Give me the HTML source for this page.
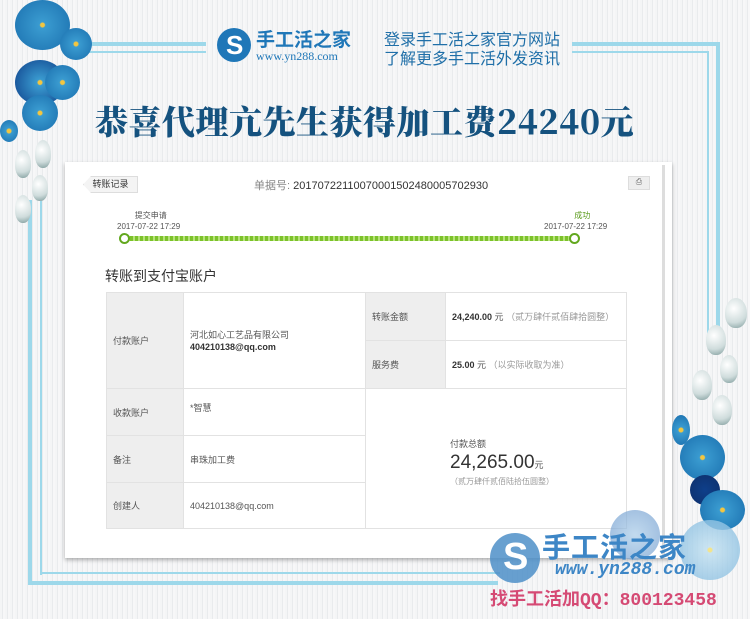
<!DOCTYPE html>
<html><head><meta charset="utf-8"><style>
*{margin:0;padding:0;box-sizing:border-box}
body{width:750px;height:619px;overflow:hidden;position:relative;font-family:"Liberation Sans","Noto Sans CJK SC",sans-serif;
background:repeating-linear-gradient(90deg,#f4f5f6 0 2px,#e9ebed 2px 3px,#f7f7f8 3px 5px);}
.abs{position:absolute}
.ln{position:absolute;background:#9dd8ea}
.t{font-family:"Noto Serif CJK SC","Liberation Serif",serif;font-weight:900;color:#15527f;font-size:33px;left:95px;top:97px;white-space:nowrap;letter-spacing:0.5px}
.card{left:65px;top:162px;width:607px;height:396px;background:#fff;box-shadow:0 2px 4px rgba(0,0,0,.3)}
.s{font-size:9px;color:#555}
table{position:absolute;left:106px;top:292px;border-collapse:collapse;font-size:9px;color:#555}
td{border:1px solid #e2e2e2;vertical-align:middle;padding-left:6px}
td.h{background:#eee;width:77px}
.fl{position:absolute;border-radius:50%;background:radial-gradient(circle,#f3c640 0 2px,#3a9bd0 3px,#1a6fae 100%)}
.bud{position:absolute;border-radius:50% 50% 45% 45%;background:radial-gradient(circle at 40% 35%,#fff,#cfdcdc 60%,#7a9898);}
</style></head><body>
<div class="ln" style="left:88px;top:42px;width:118px;height:4px"></div>
<div class="ln" style="left:88px;top:51px;width:118px;height:2px"></div>
<div class="ln" style="left:572px;top:42px;width:148px;height:4px"></div>
<div class="ln" style="left:572px;top:51px;width:137px;height:2px"></div>
<div class="ln" style="left:716px;top:42px;width:4px;height:300px"></div>
<div class="ln" style="left:707px;top:51px;width:2px;height:290px"></div>
<div class="ln" style="left:28px;top:200px;width:4px;height:385px"></div>
<div class="ln" style="left:40px;top:200px;width:2px;height:375px"></div>
<div class="ln" style="left:28px;top:581px;width:470px;height:4px"></div>
<div class="ln" style="left:40px;top:572px;width:460px;height:2px"></div>

<div class="abs" style="left:217px;top:28px;width:34px;height:34px;border-radius:50%;background:#1f77b8"></div>
<div class="abs" style="left:226px;top:32px;color:#fff;font-size:26px;font-weight:bold;line-height:26px">S</div>
<div class="abs" style="left:256px;top:29px;color:#1f77b8;font-size:19px;font-weight:bold;line-height:20px;font-family:'Noto Sans CJK SC',sans-serif">手工活之家</div>
<div class="abs" style="left:256px;top:49px;color:#1f77b8;font-size:12px;font-family:'Liberation Serif',serif">www.yn288.com</div>
<div class="abs" style="left:384px;top:29px;color:#1f6fa8;font-size:16px;line-height:19px;font-family:'Noto Sans CJK SC',sans-serif">登录手工活之家官方网站<br>了解更多手工活外发资讯</div>

<div class="abs t">恭喜代理亢先生获得加工费24240元</div>

<div class="abs card">
 <div class="abs" style="left:18px;top:14px;width:55px;height:17px;background:#f4f4f4;border:1px solid #ddd;font-size:9px;color:#333;line-height:15px;text-align:center;clip-path:polygon(8px 0,100% 0,100% 100%,8px 100%,0 50%)">转账记录</div>
 <div class="abs" style="left:189px;top:15px;font-size:11px;color:#333"><span style="color:#888">单据号: </span>20170722110070001502480005702930</div>
 <div class="abs" style="left:563px;top:14px;width:22px;height:14px;background:#eee;border:1px solid #ddd;font-size:8px;text-align:center;color:#666">⎙</div>
 <div class="abs" style="left:597px;top:3px;width:3px;height:390px;background:#ddd"></div>
 <div class="abs s" style="left:52px;top:48px;text-align:center;font-size:8px;line-height:11px">&nbsp;&nbsp;提交申请<br>2017-07-22 17:29</div>
 <div class="abs s" style="left:479px;top:48px;text-align:center;font-size:8px;line-height:11px"><span style="color:#5a9a1a">&nbsp;&nbsp;&nbsp;&nbsp;&nbsp;&nbsp;成功</span><br>2017-07-22 17:29</div>
 <div class="abs" style="left:60px;top:74px;width:451px;height:5px;background:repeating-linear-gradient(90deg,#7cc22a 0 3px,#b6e27a 3px 5px)"></div>
 <div class="abs" style="left:54px;top:71px;width:11px;height:11px;border:2px solid #62a81e;border-radius:50%;background:#fff"></div>
 <div class="abs" style="left:504px;top:71px;width:11px;height:11px;border:2px solid #62a81e;border-radius:50%;background:#fff"></div>
 <div class="abs" style="left:40px;top:104px;font-size:14px;color:#333">转账到支付宝账户</div>
</div>

<table>
<tr style="height:48px"><td class="h" rowspan="2">付款账户</td><td rowspan="2" style="width:182px;line-height:12px">河北如心工艺品有限公司<br><b style="color:#333">404210138@qq.com</b></td><td class="h" style="width:80px">转账金额</td><td style="width:181px"><b style="color:#333">24,240.00</b> 元 <span style="color:#999">（贰万肆仟贰佰肆拾圆整）</span></td></tr>
<tr style="height:48px"><td class="h">服务费</td><td><b style="color:#333">25.00</b> 元 <span style="color:#999">（以实际收取为准）</span></td></tr>
<tr style="height:47px"><td class="h">收款账户</td><td style="vertical-align:top;padding-top:12px">*智慧</td><td colspan="2" rowspan="3" style="padding-left:84px;padding-top:6px">付款总额<br><span style="font-size:19px;color:#333;line-height:26px">24,265.00</span>元<br><span style="color:#999;font-size:8px">（贰万肆仟贰佰陆拾伍圆整）</span></td></tr>
<tr style="height:47px"><td class="h">备注</td><td>串珠加工费</td></tr>
<tr style="height:46px"><td class="h">创建人</td><td>404210138@qq.com</td></tr>
</table>

<div class="fl" style="left:15px;top:0;width:55px;height:50px"></div>
<div class="fl" style="left:60px;top:28px;width:32px;height:32px"></div>
<div class="fl" style="left:15px;top:60px;width:50px;height:45px;background:radial-gradient(circle,#f3c640 0 2px,#3a9bd0 3px,#0e3f8a 100%)"></div>
<div class="fl" style="left:22px;top:95px;width:36px;height:36px"></div>
<div class="fl" style="left:45px;top:65px;width:35px;height:35px"></div>
<div class="fl" style="left:0;top:120px;width:18px;height:22px"></div>
<div class="bud" style="left:15px;top:150px;width:16px;height:28px"></div>
<div class="bud" style="left:35px;top:140px;width:16px;height:28px"></div>
<div class="bud" style="left:32px;top:175px;width:16px;height:26px"></div>
<div class="bud" style="left:15px;top:195px;width:16px;height:28px"></div>
<div class="bud" style="left:725px;top:298px;width:22px;height:30px"></div>
<div class="bud" style="left:706px;top:325px;width:20px;height:30px"></div>
<div class="bud" style="left:720px;top:355px;width:18px;height:28px"></div>
<div class="bud" style="left:692px;top:370px;width:20px;height:30px"></div>
<div class="bud" style="left:712px;top:395px;width:20px;height:30px"></div>
<div class="fl" style="left:680px;top:435px;width:45px;height:45px"></div>
<div class="fl" style="left:690px;top:475px;width:30px;height:30px;background:radial-gradient(circle,#0e3f8a,#0e2f6a)"></div>
<div class="fl" style="left:700px;top:490px;width:45px;height:40px"></div>
<div class="fl" style="left:672px;top:415px;width:18px;height:30px"></div>
<div class="fl" style="left:680px;top:520px;width:60px;height:60px;background:radial-gradient(circle,#f3e070 0 2px,#bfdff0 3px,#7fb8de 100%);opacity:.8"></div>
<div class="fl" style="left:610px;top:510px;width:50px;height:50px;background:radial-gradient(circle,#a8cbe8,#6b98cc);opacity:.7"></div>

<div class="abs" style="left:490px;top:533px;width:50px;height:50px;border-radius:50%;background:#4d8fc8;opacity:.85"></div>
<div class="abs" style="left:503px;top:535px;color:#fff;font-size:38px;font-weight:bold;line-height:44px">S</div>
<div class="abs" style="left:542px;top:530px;color:#3d86c6;font-size:28px;font-weight:bold;line-height:32px;font-family:'Noto Sans CJK SC',sans-serif;letter-spacing:1px">手工活之家</div>
<div class="abs" style="left:555px;top:560px;color:#3d86c6;font-size:18px;font-style:italic;font-weight:bold;font-family:'Liberation Mono',monospace">www.yn288.com</div>
<div class="abs" style="left:490px;top:585px;color:#d54a74;font-size:18px;font-weight:bold;font-family:'Liberation Mono','Noto Sans CJK SC',sans-serif;white-space:nowrap">找手工活加QQ：800123458</div>
</body></html>
